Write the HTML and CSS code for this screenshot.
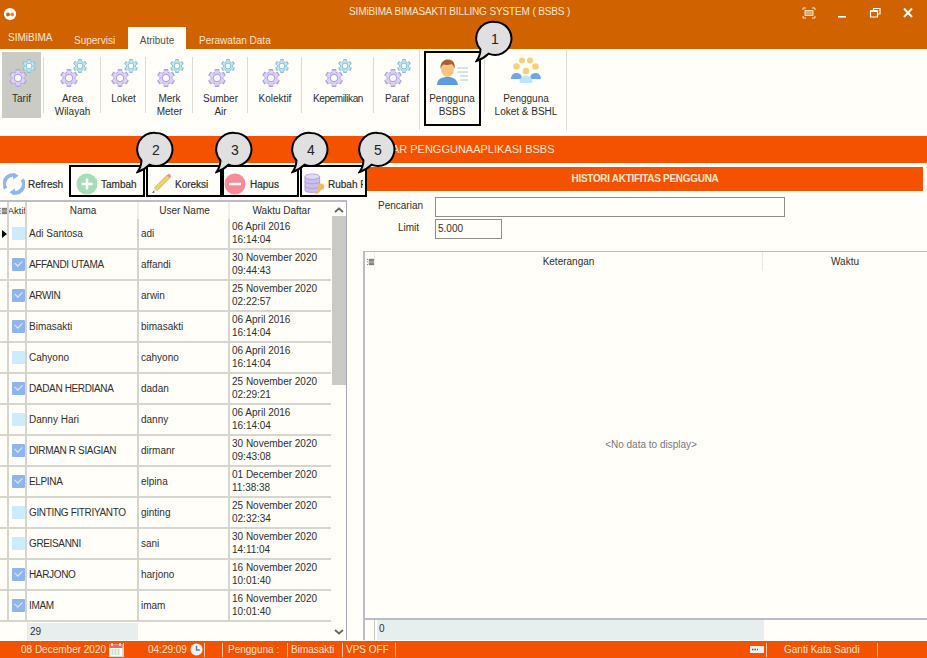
FILE: index.html
```html
<!DOCTYPE html>
<html lang="id">
<head>
<meta charset="utf-8">
<title>SIMiBIMA BIMASAKTI BILLING SYSTEM ( BSBS )</title>
<link rel="stylesheet" href="styles.css">
</head>
<body>
<svg class="defs" width="0" height="0" aria-hidden="true">
  <defs>
    <g id="teeth">
      <circle r="6.6"/>
      <rect x="-2.3" y="-9" width="4.6" height="18" rx=".6"/>
      <rect x="-2.3" y="-9" width="4.6" height="18" rx=".6" transform="rotate(60)"/>
      <rect x="-2.3" y="-9" width="4.6" height="18" rx=".6" transform="rotate(120)"/>
    </g>
    <g id="gear-purple">
      <use href="#teeth" fill="#b3a3e0"/>
      <use href="#teeth" fill="#dcd2f4" transform="scale(.84)"/>
      <circle r="3.6" fill="#fffef8" stroke="#b3a3e0" stroke-width="1.2"/>
    </g>
    <g id="gear-blue">
      <use href="#teeth" fill="#86c0d6" transform="scale(.78)"/>
      <use href="#teeth" fill="#c3e6f1" transform="scale(.64)"/>
      <circle r="2.9" fill="#fffef8" stroke="#86c0d6" stroke-width="1"/>
    </g>
    <symbol id="gears" viewBox="0 0 30 30">
      <use href="#gear-purple" transform="translate(11,21)"/>
      <use href="#gear-blue" transform="translate(22,9)"/>
    </symbol>
    <symbol id="bubble" viewBox="0 0 40 44">
      <path d="M20 2a16.500 16.500 0 1 1-6.500 31.700C10 37 6.500 39.500 1.500 41c2.500-3.500 3.800-7 4-11.500A16.500 16.500 0 0 1 20 2z" fill="#e0e0e0" stroke="#000" stroke-width="2"/>
    </symbol>
  </defs>
</svg>

<div class="app">
  <header class="chrome">
    <div class="titlebar">
      <svg class="logo" viewBox="0 0 16 16"><circle cx="8" cy="8" r="7" fill="#fff"/><circle cx="5.700" cy="8.500" r="2.200" fill="#d06200"/><circle cx="10.500" cy="8.500" r="2.200" fill="#e98a3a"/></svg>
      <span class="apptitle">SIMiBIMA BIMASAKTI BILLING SYSTEM ( BSBS )</span>
      <div class="winbtns">
        <svg class="winbtn" viewBox="0 0 14 12"><path d="M1 3V1h3M10 1h3v2M13 9v2h-3M4 11H1V9" fill="none" stroke="#f6e3cf" stroke-width="1"/><rect x="3" y="3.500" width="8" height="5" fill="#e9a468" stroke="#f6e3cf"/></svg>
        <svg class="winbtn" viewBox="0 0 14 12"><rect x="3" y="9" width="8" height="1.600" fill="#fff"/></svg>
        <svg class="winbtn" viewBox="0 0 14 12"><path d="M5.500 3V1.500h6.500v5.500H10M2.500 4h7v6h-7z" fill="none" stroke="#fff" stroke-width="1.200"/><path d="M2.500 4h7" stroke="#fff" stroke-width="2"/></svg>
        <svg class="winbtn" viewBox="0 0 14 12"><path d="M3 1.500l8 8.500M11 1.500L3 10" stroke="#fff" stroke-width="2"/></svg>
      </div>
    </div>
    <nav class="tabs">
      <span class="tab tab-app">SIMiBIMA</span>
      <span class="tab tab-super">Supervisi</span>
      <span class="tab tab-active">Atribute</span>
      <span class="tab">Perawatan Data</span>
    </nav>
  </header>

  <section class="ribbon">
    <div class="rib w43"><div class="rib-in selected"><svg class="rib-ic"><use href="#gears"/></svg><span>Tarif</span></div></div>
    <div class="rib w57"><div class="rib-in"><svg class="rib-ic"><use href="#gears"/></svg><span>Area<br>Wilayah</span></div></div>
    <div class="rib w45"><div class="rib-in"><svg class="rib-ic"><use href="#gears"/></svg><span>Loket</span></div></div>
    <div class="rib w47"><div class="rib-in"><svg class="rib-ic"><use href="#gears"/></svg><span>Merk<br>Meter</span></div></div>
    <div class="rib w55"><div class="rib-in"><svg class="rib-ic"><use href="#gears"/></svg><span>Sumber<br>Air</span></div></div>
    <div class="rib w54"><div class="rib-in"><svg class="rib-ic"><use href="#gears"/></svg><span>Kolektif</span></div></div>
    <div class="rib w72"><div class="rib-in"><svg class="rib-ic"><use href="#gears"/></svg><span class="tight">Kepemilikan</span></div></div>
    <div class="rib w46 long"><div class="rib-in"><svg class="rib-ic"><use href="#gears"/></svg><span>Paraf</span></div></div>
    <div class="rib w65 long-short"><div class="rib-in">
      <svg class="rib-ic" viewBox="0 0 30 30">
        <path d="M0 28c0-6 5-8 10-8h1c5 0 9 2 10 8z" fill="#5c9be0"/>
        <ellipse cx="10.500" cy="12" rx="6.500" ry="8" fill="#f6c47d"/>
        <path d="M3.500 12C3 5 7 2.500 11 2.500c5 0 7.500 4 6.500 9.500-.6-2.500-1.500-4-3-5-3 1.500-6.500 1-8 .5-1.500 1-2.300 2.500-3 4.500z" fill="#a85f32"/>
        <path d="M20 11h11M20 15h11M23 19h8M23 23h8" stroke="#bfe0ec" stroke-width="1.500"/>
      </svg><span>Pengguna<br>BSBS</span></div></div>
    <div class="rib w82 long"><div class="rib-in">
      <svg class="rib-ic" viewBox="0 0 30 30">
        <circle cx="11" cy="3.500" r="3" fill="#f4d27a"/><circle cx="19" cy="3.500" r="3" fill="#f4d27a"/>
        <circle cx="5.500" cy="9.500" r="3.300" fill="#f4d27a"/><circle cx="24.500" cy="9.500" r="3.300" fill="#f4d27a"/>
        <path d="M0 22c0-4 2.500-6 5.500-6s5.500 2 5.500 6zM19 22c0-4 2.500-6 5.500-6s5.500 2 5.500 6z" fill="#6fa8e8"/>
        <circle cx="15" cy="14" r="3.300" fill="#f4d27a"/>
        <path d="M8.500 26c0-5 3-7.500 6.500-7.500s6.500 2.500 6.500 7.500z" fill="#bfe6f5"/>
      </svg><span>Pengguna<br>Loket &amp; BSHL</span></div></div>
  </section>

  <div class="banner"><span>DAFTAR PENGGUNAAPLIKASI BSBS</span></div>

  <main class="main">
    <section class="left">
      <div class="toolbar">
        <div class="tool t-refresh">
          <svg class="tool-ic" viewBox="0 0 24 24"><path d="M3 17A9.500 9.500 0 0 1 13 2.500" fill="none" stroke="#8fb6ee" stroke-width="4"/><path d="M11 -1l6 4-6 4z" fill="#8fb6ee"/><path d="M21 7a9.500 9.500 0 0 1-10 14.500" fill="none" stroke="#8fb6ee" stroke-width="4"/><path d="M13 25l-6-4 6-4z" fill="#8fb6ee"/></svg>
          <span>Refresh</span>
        </div>
        <div class="tool t-add">
          <svg class="tool-ic" viewBox="0 0 22 22"><circle cx="11" cy="11" r="10.500" fill="#a7dcb6"/><path d="M11 5.500v11M5.500 11h11" stroke="#fff" stroke-width="2.500"/></svg>
          <span>Tambah</span>
        </div>
        <div class="tool t-edit">
          <svg class="tool-ic" viewBox="0 0 24 24"><path d="M5 16L18.500 2.500l3 3L8 19z" fill="#f4cf6a" stroke="#c9a040" stroke-width=".7"/><path d="M18.500 2.500l1.500-1.500c1-.5 3 1.500 3 3l-1.500 1.500z" fill="#ef8f8f"/><path d="M5 16l3 3-5.500 3z" fill="#f3e0bd"/><path d="M2.500 22l1-2.700 1.700 1.700z" fill="#555"/></svg>
          <span>Koreksi</span>
        </div>
        <div class="tool t-del">
          <svg class="tool-ic" viewBox="0 0 22 22"><circle cx="11" cy="11" r="10.500" fill="#fb8a97"/><path d="M5 11h12" stroke="#fff" stroke-width="2.500"/></svg>
          <span>Hapus</span>
        </div>
        <div class="tool t-pass">
          <svg class="tool-ic" viewBox="0 0 24 24"><path d="M1 4v15c0 3 16 3 16 0V4z" fill="#cbbdee" stroke="#a593d8" stroke-width=".8"/><ellipse cx="9" cy="4" rx="8" ry="3" fill="#e2d9f6" stroke="#a593d8" stroke-width=".8"/><path d="M1 9.500c0 3 16 3 16 0M1 14.500c0 3 16 3 16 0" fill="none" stroke="#a593d8" stroke-width=".8"/><circle cx="18.500" cy="15" r="3.500" fill="#eebd62"/><path d="M16.500 17l-5 5 2 1 1-1 1 .500 3-4z" fill="#eebd62"/></svg>
          <span>Rubah Password</span>
        </div>
      </div>

      <div class="grid">
        <div class="grid-body">
          <div class="row head">
            <div class="c c-ind"><svg class="colmenu" viewBox="0 0 8 8"><path d="M0 1h1M0 4h1M0 7h1M2 1h6M2 2.500h6M2 4h6M2 5.500h6M2 7h6" stroke="#444" stroke-width=".9"/></svg></div>
            <div class="c c-chk clipped">Aktif</div>
            <div class="c c-name center">Nama</div>
            <div class="c c-user center">User Name</div>
            <div class="c c-date center">Waktu Daftar</div>
          </div>
          <div class="rows">
            <div class="row"><div class="c c-ind"><i class="arrow"></i></div><div class="c c-chk"><i class="cb"></i></div><div class="c c-name">Adi Santosa</div><div class="c c-user">adi</div><div class="c c-date">06 April 2016<br>16:14:04</div></div>
            <div class="row"><div class="c c-ind"></div><div class="c c-chk"><i class="cb on"></i></div><div class="c c-name up">AFFANDI UTAMA</div><div class="c c-user">affandi</div><div class="c c-date">30 November 2020<br>09:44:43</div></div>
            <div class="row"><div class="c c-ind"></div><div class="c c-chk"><i class="cb on"></i></div><div class="c c-name up">ARWIN</div><div class="c c-user">arwin</div><div class="c c-date">25 November 2020<br>02:22:57</div></div>
            <div class="row"><div class="c c-ind"></div><div class="c c-chk"><i class="cb on"></i></div><div class="c c-name">Bimasakti</div><div class="c c-user">bimasakti</div><div class="c c-date">06 April 2016<br>16:14:04</div></div>
            <div class="row"><div class="c c-ind"></div><div class="c c-chk"><i class="cb"></i></div><div class="c c-name">Cahyono</div><div class="c c-user">cahyono</div><div class="c c-date">06 April 2016<br>16:14:04</div></div>
            <div class="row"><div class="c c-ind"></div><div class="c c-chk"><i class="cb on"></i></div><div class="c c-name up">DADAN HERDIANA</div><div class="c c-user">dadan</div><div class="c c-date">25 November 2020<br>02:29:21</div></div>
            <div class="row"><div class="c c-ind"></div><div class="c c-chk"><i class="cb"></i></div><div class="c c-name">Danny Hari</div><div class="c c-user">danny</div><div class="c c-date">06 April 2016<br>16:14:04</div></div>
            <div class="row"><div class="c c-ind"></div><div class="c c-chk"><i class="cb on"></i></div><div class="c c-name up">DIRMAN R SIAGIAN</div><div class="c c-user">dirmanr</div><div class="c c-date">30 November 2020<br>09:43:08</div></div>
            <div class="row"><div class="c c-ind"></div><div class="c c-chk"><i class="cb on"></i></div><div class="c c-name up">ELPINA</div><div class="c c-user">elpina</div><div class="c c-date">01 December 2020<br>11:38:38</div></div>
            <div class="row"><div class="c c-ind"></div><div class="c c-chk"><i class="cb"></i></div><div class="c c-name up">GINTING FITRIYANTO</div><div class="c c-user">ginting</div><div class="c c-date">25 November 2020<br>02:32:34</div></div>
            <div class="row"><div class="c c-ind"></div><div class="c c-chk"><i class="cb"></i></div><div class="c c-name up">GREISANNI</div><div class="c c-user">sani</div><div class="c c-date">30 November 2020<br>14:11:04</div></div>
            <div class="row"><div class="c c-ind"></div><div class="c c-chk"><i class="cb on"></i></div><div class="c c-name up">HARJONO</div><div class="c c-user">harjono</div><div class="c c-date">16 November 2020<br>10:01:40</div></div>
            <div class="row"><div class="c c-ind"></div><div class="c c-chk"><i class="cb on"></i></div><div class="c c-name up">IMAM</div><div class="c c-user">imam</div><div class="c c-date">16 November 2020<br>10:01:40</div></div>
          </div>
          <div class="grid-foot">
            <div class="f-ind"></div>
            <div class="f-sum">29</div>
          </div>
        </div>
        <div class="scroll">
          <svg class="chev" viewBox="0 0 10 6"><path d="M1 5l4-3.500L9 5" fill="none" stroke="#666" stroke-width="1.800"/></svg>
          <div class="thumb"></div>
          <svg class="chev chev-down" viewBox="0 0 10 6"><path d="M1 1l4 3.500L9 1" fill="none" stroke="#666" stroke-width="1.800"/></svg>
        </div>
      </div>
    </section>

    <section class="right">
      <h2 class="hist">HISTORI AKTIFITAS PENGGUNA</h2>
      <div class="form-row"><label class="lbl">Pencarian</label><div class="inp inp-wide"></div></div>
      <div class="form-row form-row2"><label class="lbl lbl-limit">Limit</label><div class="inp inp-small">5.000</div></div>
      <div class="hgrid">
        <div class="h-head">
          <div class="h-ind"><svg class="colmenu" viewBox="0 0 8 8"><path d="M0 1h1M0 4h1M0 7h1M2 1h6M2 2.500h6M2 4h6M2 5.500h6M2 7h6" stroke="#444" stroke-width=".9"/></svg></div>
          <div class="h-ket">Keterangan</div>
          <div class="h-wkt">Waktu</div>
        </div>
        <div class="h-empty">&lt;No data to display&gt;</div>
        <div class="h-foot">
          <div class="hf-ind"></div>
          <div class="hf-sum">0</div>
        </div>
      </div>
    </section>
  </main>

  <footer class="status">
    <span class="st st-date">08 December 2020</span>
    <svg class="st-ic" viewBox="0 0 14 14"><rect x=".5" y="2" width="13" height="11.500" fill="#fff" stroke="#d9d9d9"/><rect x=".5" y="2" width="13" height="3" fill="#ee6a5a"/><path d="M3 0v3M11 0v3" stroke="#fff" stroke-width="1.500"/><path d="M2.500 7h9M2.500 9h9M2.500 11h9" stroke="#8cc3a0" stroke-dasharray="2 1" stroke-width="1.200"/></svg>
    <i class="sep s1"></i>
    <span class="st st-time">04:29:09</span>
    <svg class="st-ic st-clock" viewBox="0 0 14 14"><circle cx="7" cy="7" r="6.500" fill="#f3f3f3"/><path d="M7 3v4.500h3.500" fill="none" stroke="#5d7ba8" stroke-width="1.500"/></svg>
    <i class="sep s2"></i>
    <i class="sep s3"></i>
    <span class="st st-user">Pengguna :</span>
    <i class="sep s4"></i>
    <span class="st st-name">Bimasakti</span>
    <i class="sep s5"></i>
    <span class="st st-vps">VPS OFF</span>
    <i class="sep s6"></i>
    <span class="st-space"></span>
    <svg class="st-kbd" viewBox="0 0 14 7"><rect width="14" height="7" fill="#eee"/><path d="M2 3.500h6" stroke="#555" stroke-width="1.500" stroke-dasharray="1.500 1"/></svg>
    <i class="sep s7"></i>
    <span class="st st-pass">Ganti Kata Sandi</span>
    <i class="sep s8"></i>
    <span class="st-end"></span>
  </footer>

  <div class="mark m1"></div>
  <div class="mark m2"></div>
  <div class="mark m3"></div>
  <div class="mark m4"></div>
  <div class="mark m5"></div>
  <div class="callout b1"><svg class="bub"><use href="#bubble"/></svg><span>1</span></div>
  <div class="callout b2"><svg class="bub"><use href="#bubble"/></svg><span>2</span></div>
  <div class="callout b3"><svg class="bub"><use href="#bubble"/></svg><span>3</span></div>
  <div class="callout b4"><svg class="bub"><use href="#bubble"/></svg><span>4</span></div>
  <div class="callout b5"><svg class="bub"><use href="#bubble"/></svg><span>5</span></div>
</div>
</body>
</html>
```
FILE: styles.css
```css
* { box-sizing: border-box; }
html, body { margin: 0; padding: 0; }
body {
  width: 927px; height: 658px; overflow: hidden;
  background: #fffef8; color: #2e2e2e;
  font-family: "Liberation Sans", Arial, sans-serif; font-size: 10px;
}
.defs { position: absolute; }
.app { position: relative; width: 927px; height: 658px; display: flex; flex-direction: column; overflow: hidden; }

.chrome { height: 49px; background: #d06200; color: #fbe6d2; display: flex; flex-direction: column; flex: none; }
.titlebar { height: 27px; display: flex; align-items: center; padding-left: 3px; position: relative; }
.logo { width: 14px; height: 14px; flex: none; }
.apptitle { position: absolute; left: 349px; top: 6px; font-size: 10px; letter-spacing: -.13px; white-space: nowrap; }
.winbtns { margin-left: auto; display: flex; gap: 19px; padding-right: 12px; margin-top: -2px; }
.winbtn { width: 14px; height: 12px; }
.tabs { flex: 1; display: flex; align-items: flex-end; }
.tab { height: 22px; line-height: 27px; padding: 0 13px; white-space: nowrap; }
.tab-app { padding: 0 0 0 8px; width: 61px; line-height: 22px; }
.tab-super { width: 67px; }
.tab-active { background: #fffef8; color: #55504a; width: 58px; padding: 0; text-align: center; line-height: 27px; }

.ribbon { height: 81px; display: flex; flex: none; }
.rib { position: relative; height: 81px; padding-bottom: 12px; flex: none; }
.rib::after { content: ""; position: absolute; right: 0; top: 8px; width: 1px; height: 56px; background: #dcdcd4; }
.rib.long::after { top: 1px; height: 80px; }
.rib.long-short::after { top: 1px; height: 62px; }
.rib.long-short { padding-right: 1px; }
.w43 { width: 44px; padding: 3px 3px 12px 2px; }
.w57 { width: 57px; } .w45 { width: 45px; } .w47 { width: 47px; } .w55 { width: 55px; }
.w54 { width: 54px; } .w72 { width: 72px; } .w46 { width: 46px; } .w65 { width: 65px; } .w82 { width: 82px; }
.rib-in { height: 100%; display: flex; flex-direction: column; align-items: center; text-align: center; line-height: 13px; padding-top: 8px; }
.rib-in span { margin-top: 5px; white-space: nowrap; }
.rib-in .tight { letter-spacing: -.4px; }
.rib-ic { width: 32px; height: 30px; flex: none; }
.w43 .rib-in { padding-top: 5px; background: #c9cbc4; }

.banner { height: 27px; margin-top: 6px; background: #f55200; color: #fbe6d2; font-size: 11px; line-height: 27px; padding-left: 364px; flex: none; white-space: nowrap; }

.main { flex: 1; display: flex; min-height: 0; }
.left { width: 363px; flex: none; display: flex; flex-direction: column; overflow: hidden; }
.toolbar { height: 37px; padding-top: 5px; display: flex; flex: none; white-space: nowrap; }
.tool { height: 32px; display: flex; align-items: center; flex: none; overflow: hidden; -webkit-text-stroke: .2px #2e2e2e; }
.tool-ic { width: 22px; height: 22px; flex: none; margin-right: 3px; }
.t-refresh { width: 70px; padding-left: 3px; }
.t-add { width: 76px; padding-left: 6px; }
.t-edit { width: 76px; padding-left: 4px; }
.t-del { width: 78px; padding-left: 2px; }
.t-del .tool-ic { margin-right: 4px; }
.t-pass { width: 63px; padding-left: 4px; }
.t-pass .tool-ic { margin-right: 2px; }

.grid { width: 347px; flex: 1; display: flex; border-top: 2px solid #bcbcc8; border-right: 1px solid #a8a6bd; min-height: 0; }
.grid-body { width: 331px; display: flex; flex-direction: column; flex: none; }
.row { display: flex; height: 31px; border-bottom: 2px solid #d6d6ce; flex: none; }
.row.head { height: 17px; border-bottom: 0; }
.c { border-right: 2px solid #d6d6ce; display: flex; align-items: center; padding-left: 2px; overflow: hidden; white-space: nowrap; flex: none; }
.row.head .c { border-right-color: #efefe9; }
.c-ind { width: 9px; padding: 0; }
.c-chk { width: 18px; padding: 0 0 0 3px; }
.c-name { width: 112px; }
.c-name.up { letter-spacing: -.35px; }
.c-user { width: 91px; }
.c-date { width: 101px; padding-left: 2px; border-right: 0; line-height: 13px; display: block; padding-top: 1px; }
.row.head .c-date { display: flex; padding-top: 0; }
.center { justify-content: center; }
.row.head .c-ind, .row.head .c-chk { border-right-color: #d6d6ce; }
.clipped { justify-content: center; padding: 0; font-size: 9.5px; }
.colmenu { width: 7px; height: 8px; }
.arrow { width: 0; height: 0; border-left: 5px solid #000; border-top: 4.500px solid transparent; border-bottom: 4.500px solid transparent; margin-left: 2px; }
.cb { width: 13px; height: 13px; background: #cdecfb; display: block; border-radius: 1px; position: relative; }
.cb.on { background: #8fb4ee; }
.cb.on::after { content: ""; position: absolute; left: 3px; top: 2px; width: 6px; height: 4px; border-left: 1.500px solid #dfeeff; border-bottom: 1.500px solid #dfeeff; transform: rotate(-45deg); }
.rows { flex: none; }
.grid-foot { flex: 1; display: flex; }
.f-ind { width: 28px; border-right: 1px solid #e8e8e0; }
.f-sum { width: 110px; height: 18px; background: #e6efee; padding: 3px 0 0 2px; margin-top: 1px; }

.scroll { width: 15px; flex: none; position: relative; display: flex; flex-direction: column; align-items: center; }
.chev { width: 10px; height: 6px; margin-top: 5px; flex: none; }
.thumb { width: 14px; height: 169px; background: #c9cbc4; margin-top: 3px; }
.chev-down { margin-top: auto; margin-bottom: 5px; }

.right { flex: 1; min-width: 0; display: flex; flex-direction: column; overflow: hidden; }
.hist { margin: 4px 4px 0; height: 24px; background: #f55200; color: #fbe6d2; font-size: 10px; letter-spacing: -.3px; font-weight: 700; line-height: 24px; text-align: center; flex: none; }
.form-row { display: flex; align-items: center; margin-top: 6px; flex: none; }
.form-row2 { margin-top: 2px; }
.lbl { width: 60px; text-align: right; margin-right: 12px; margin-top: -3px; }
.lbl-limit { padding-right: 4px; margin-top: -3px; }
.inp { height: 20px; border: 1px solid #8e8e86; background: #fffef8; padding: 2px 2px; line-height: 14px; }
.inp-wide { width: 350px; }
.inp-small { width: 67px; }
.hgrid { flex: 1; min-height: 0; margin-top: 12px; width: 574px; border-left: 2px solid #bcbcc8; border-top: 1px solid #bcbcc8; display: flex; flex-direction: column; }
.h-head { height: 19px; display: flex; flex: none; }
.h-ind { width: 10px; display: flex; align-items: center; justify-content: flex-end; border-right: 1px solid #f0f0ea; }
.h-ket { width: 388px; text-align: center; line-height: 19px; border-right: 1px solid #e8e8e2; }
.h-wkt { flex: 1; text-align: center; line-height: 19px; padding-right: 10px; }
.h-empty { flex: 1; display: flex; align-items: center; justify-content: center; color: #777; }
.h-foot { height: 22px; flex: none; display: flex; border-top: 2px solid #bcbcc8; }
.hf-ind { width: 10px; border-right: 1px solid #c8c8c0; }
.hf-sum { width: 387px; margin-left: 2px; background: #e6efee; padding: 3px 0 0 2px; }

.status { height: 17px; flex: none; margin-top: 1px; background: #f55200; color: #fbe6d2; display: flex; align-items: center; white-space: nowrap; }
.st-date { margin-left: 21px; width: 82px; }
.st-ic { width: 14px; height: 14px; margin-left: 6px; flex: none; }
.sep { width: 1px; height: 14px; background: #f6c9a6; flex: none; }
.s1 { margin-left: 0; }
.st-time { margin-left: 24px; width: 38px; }
.st-clock { margin-left: 4px; width: 13px; height: 13px; }
.s2 { margin-left: 1px; }
.s3 { margin-left: 17px; }
.st-user { margin-left: 5px; width: 49px; }
.s4 { margin-left: 10px; }
.st-name { margin-left: 3px; width: 42px; }
.s5 { margin-left: 9px; }
.st-vps { margin-left: 3px; width: 39px; }
.s6 { margin-left: 10px; }
.st-space { flex: 1; }
.st-kbd { width: 14px; height: 7px; margin-right: 2px; flex: none; }
.st-pass { margin-left: 17px; width: 73px; }
.s8 { margin-left: 20px; }
.st-end { width: 49px; flex: none; }

.mark { position: absolute; border: 2px solid #000; }
.m1 { left: 424px; top: 51px; width: 57px; height: 75px; }
.m2 { left: 69px; top: 165px; width: 76px; height: 32px; }
.m3 { left: 146px; top: 165px; width: 76px; height: 32px; }
.m4 { left: 222px; top: 165px; width: 77px; height: 32px; }
.m5 { left: 300px; top: 165px; width: 67px; height: 32px; }
.callout { position: absolute; width: 40px; height: 44px; font-size: 14px; color: #222; }
.bub { width: 40px; height: 44px; display: block; }
.callout span { position: absolute; left: 3px; top: 9px; width: 34px; text-align: center; line-height: 20px; }
.b1 { left: 475px; top: 20px; }
.b2 { left: 136px; top: 131px; }
.b3 { left: 215px; top: 131px; }
.b4 { left: 291px; top: 131px; }
.b5 { left: 358px; top: 131px; }
```
